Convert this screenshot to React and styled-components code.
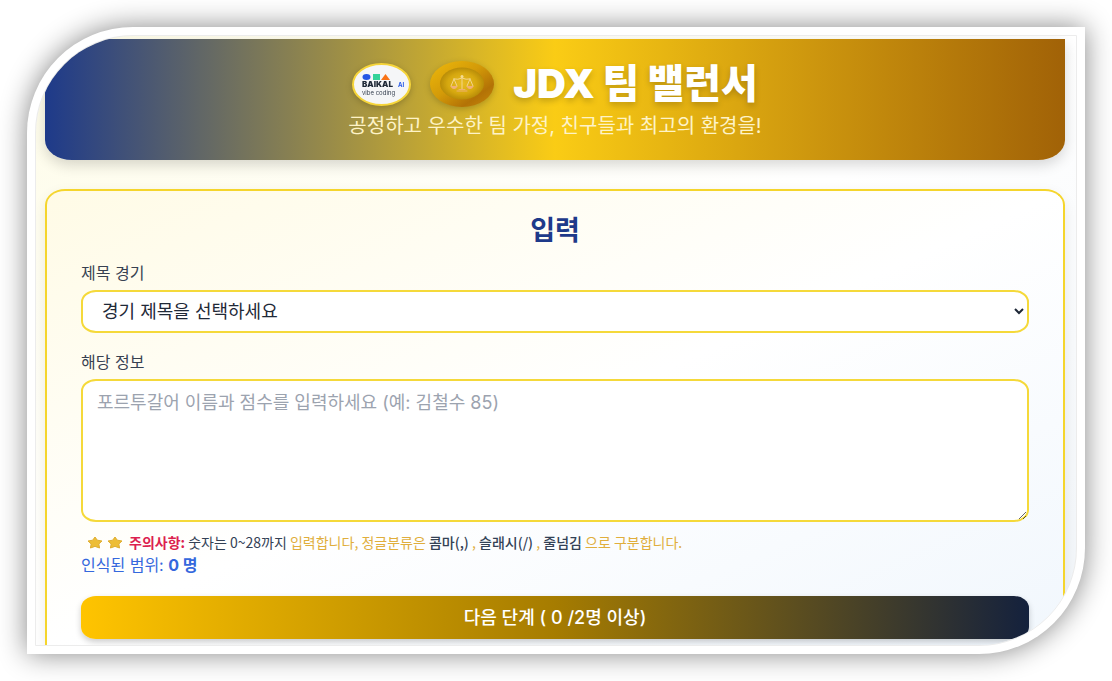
import React, { useState } from "react";
import styled, { createGlobalStyle } from "styled-components";

const GlobalStyle = createGlobalStyle`
  *, *::before, *::after { box-sizing: border-box; }
  body {
    margin: 0;
    background: #fff;
    color: #1f2937;
    font-family: Inter, "Noto Sans CJK KR", sans-serif;
  }
  h1, h2, p { margin: 0; }
`;

const Page = styled.div`
  padding: 27px;
`;

const Frame = styled.div`
  padding: 8px;
  background: #fff;
  border-radius: 106px 0 106px 0;
  box-shadow: 0 0 28px rgba(0, 0, 0, 0.48);
`;

const Screen = styled.main`
  display: flex;
  flex-direction: column;
  gap: 29px;
  padding: 3px 11px 0 9px;
  overflow: hidden;
  border: 1px solid #ececec;
  border-radius: 98px 0 98px 0;
  background: linear-gradient(to bottom right, #fefce8 0%, #fff 50%, #f1f5f9 100%);
`;

const Header = styled.header`
  padding: 22px 20px 21px;
  border-radius: 0 0 27px 27px / 0 0 20px 20px;
  background: linear-gradient(90deg, #1e3a8a 0%, #facc15 50%, #a16207 100%);
  box-shadow: 0 5px 14px rgba(0, 0, 0, 0.16);
  text-align: center;
`;

const Brand = styled.div`
  display: flex;
  align-items: center;
  justify-content: center;
  gap: 19px;
  height: 46px;
`;

const Logo = styled.svg`
  display: block;
  flex: none;
  overflow: visible;
  filter: drop-shadow(0 2px 3px rgba(0, 0, 0, 0.2));
`;

const Title = styled.h1`
  color: #fff;
  font-size: 40px;
  line-height: 46px;
  font-weight: 900;
  white-space: nowrap;
  text-shadow: 0 3px 6px rgba(0, 0, 0, 0.2);
`;

const Subtitle = styled.p`
  margin-top: 6px;
  color: #fef3c7;
  font-size: 20px;
  line-height: 26px;
`;

const Card = styled.form`
  display: flex;
  flex-direction: column;
  padding: 22px 34px 6px;
  border: 2px solid #f5d52c;
  border-bottom: 0;
  border-radius: 20px 20px 0 0 / 16px 16px 0 0;
  background: linear-gradient(to bottom right, #fffbe6 0%, #fff 50%, #f1f7fd 100%);
  box-shadow: 0 5px 14px rgba(0, 0, 0, 0.08);
`;

const Heading = styled.h2`
  margin-bottom: 12px;
  color: #1e3a8a;
  font-size: 27px;
  line-height: 36px;
  font-weight: 700;
  text-align: center;
`;

const Field = styled.div`
  display: flex;
  flex-direction: column;
  gap: 5px;
  & + & { margin-top: 17px; }
`;

const Label = styled.label`
  color: #374151;
  font-size: 16px;
  line-height: 24px;
  font-weight: 400;
`;

const Select = styled.select`
  width: 100%;
  height: 43px;
  padding: 0 0 0 15px;
  border: 2px solid #f5d93a;
  border-radius: 15px 15px 15px 15px / 12px 12px 12px 12px;
  background-color: #fff;
  color: #1f2937;
  font-family: inherit;
  font-size: 18px;
`;

const TextArea = styled.textarea`
  display: block;
  width: 100%;
  height: 143px;
  padding: 8px 14px;
  border: 2px solid #f5d93a;
  border-radius: 15px 15px 15px 15px / 12px 12px 12px 12px;
  background: #fff;
  color: #1f2937;
  font-family: inherit;
  font-size: 18px;
  line-height: 28px;
  resize: vertical;
  &::placeholder { color: #9ca3af; opacity: 1; }
`;

const Hint = styled.p`
  display: flex;
  align-items: center;
  gap: 4px;
  margin-top: 10px;
  padding-left: 6px;
  color: #e0ae3c;
  font-family: "Noto Sans CJK KR", sans-serif;
  font-size: 14px;
  line-height: 20px;
`;

const HintText = styled.span`
  padding-left: 2px;
`;

const Star = styled.svg`
  flex: none;
`;

const Warning = styled.strong`
  color: #dc1f4f;
  font-weight: 700;
`;

const Term = styled.span`
  color: #334155;
  font-weight: ${(p) => (p.$strong ? 500 : 400)};
`;

const Count = styled.p`
  margin-top: 1px;
  color: #3568dd;
  font-size: 16px;
  line-height: 24px;
  strong { font-weight: 700; }
`;

const Submit = styled.button`
  height: 43px;
  margin-top: 19px;
  padding: 0 0 3px;
  border: 0;
  border-radius: 15px 15px 15px 15px / 12px 12px 12px 12px;
  background: linear-gradient(90deg, #ffc400 0%, #a67c00 50%, #14213d 100%);
  box-shadow: 0 3px 6px rgba(0, 0, 0, 0.2);
  color: #fff;
  font-family: inherit;
  font-size: 18px;
  font-weight: 500;
`;

function BaikalLogo() {
  return (
    <Logo width="59" height="43" viewBox="0 0 59 43" role="img" aria-label="Baikal AI">
      <ellipse cx="29.5" cy="21.5" rx="28.5" ry="20.5" fill="#f5f6f8" stroke="#f6d53a" strokeWidth="2" />
      <ellipse cx="14.5" cy="14" rx="4" ry="3" fill="#2457e6" />
      <rect x="21" y="11" width="7" height="6" fill="#34d399" />
      <path d="M33.5 11 38 17H29Z" fill="#f97316" />
      <text x="10" y="24" fontSize="8" fontWeight="900" fill="#1f2937">BAIKAL</text>
      <text x="46" y="24" fontSize="6" fontWeight="700" fill="#2457e6">AI</text>
      <text x="10" y="32" fontSize="6" fill="#374151">vibe coding</text>
    </Logo>
  );
}

function CoinLogo() {
  return (
    <Logo width="64" height="46" viewBox="0 0 64 46" aria-hidden="true">
      <defs>
        <linearGradient id="rim" x1="0" y1="0" x2="1" y2="1">
          <stop offset="0" stopColor="#eeb90b" />
          <stop offset="0.45" stopColor="#d39a08" />
          <stop offset="0.75" stopColor="#b37206" />
          <stop offset="1" stopColor="#c98a0a" />
        </linearGradient>
        <radialGradient id="face">
          <stop offset="0" stopColor="#e9bd25" />
          <stop offset="0.65" stopColor="#d6a80f" />
          <stop offset="1" stopColor="#b88c08" />
        </radialGradient>
      </defs>
      <ellipse cx="32" cy="23" rx="32" ry="23" fill="url(#rim)" />
      <ellipse cx="32" cy="22.5" rx="22" ry="16" fill="url(#face)" />
      <g fill="none" stroke="#f3d58a" strokeWidth="1" strokeLinecap="round">
        <path d="M32 15v13M24 18q4 1 8-1q4 2 8 1M24 18l-3 7M24 18l3 7M40 18l-3 7M40 18l3 7" />
        <path d="M27 30h10M29 28.500h6" stroke="#eeb070" strokeWidth="1" />
      </g>
      <path d="M20.500 25h7q-1 3-3.500 3t-3.500-3ZM36.500 25h7q-1 3-3.500 3t-3.500-3Z" fill="#f0b078" />
      <circle cx="32" cy="15.500" r="1.500" fill="#f6dc91" />
    </Logo>
  );
}

function StarIcon() {
  return (
    <Star width="16" height="13" viewBox="0 0 16 13" aria-hidden="true">
      <path
        d="M8 1 10.300 4.200 15 5 11.800 8 12.600 12 8 10.400 3.400 12 4.200 8 1 5 5.700 4.200Z"
        fill="#edbd35"
        stroke="#dfae30"
        strokeWidth="1"
        strokeLinejoin="round"
      />
    </Star>
  );
}

export default function App() {
  const [players, setPlayers] = useState("");
  const count = players.split(/[\n,/]/).filter((name) => name.trim()).length;

  return (
    <>
      <GlobalStyle />
      <Page>
        <Frame>
          <Screen>
            <Header>
              <Brand>
                <BaikalLogo />
                <CoinLogo />
                <Title>JDX 팀 밸런서</Title>
              </Brand>
              <Subtitle>공정하고 우수한 팀 가정, 친구들과 최고의 환경을!</Subtitle>
            </Header>
            <Card onSubmit={(event) => event.preventDefault()}>
              <Heading>입력</Heading>
              <Field>
                <Label htmlFor="game">제목 경기</Label>
                <Select id="game" defaultValue="">
                  <option value="">경기 제목을 선택하세요</option>
                </Select>
              </Field>
              <Field>
                <Label htmlFor="players">해당 정보</Label>
                <TextArea
                  id="players"
                  value={players}
                  onChange={(event) => setPlayers(event.target.value)}
                  placeholder="포르투갈어 이름과 점수를 입력하세요 (예: 김철수 85)"
                />
              </Field>
              <Hint>
                <StarIcon />
                <StarIcon />
                <HintText>
                  <Warning>주의사항:</Warning> <Term>숫자는 0~28까지</Term> 입력합니다, 정글분류은{" "}
                  <Term $strong>콤마(,)</Term> , <Term $strong>슬래시(/)</Term> ,{" "}
                  <Term $strong>줄넘김</Term> 으로 구분합니다.
                </HintText>
              </Hint>
              <Count>
                인식된 범위: <strong>{count} 명</strong>
              </Count>
              <Submit type="submit">다음 단계 ( {count} /2명 이상)</Submit>
            </Card>
          </Screen>
        </Frame>
      </Page>
    </>
  );
}
